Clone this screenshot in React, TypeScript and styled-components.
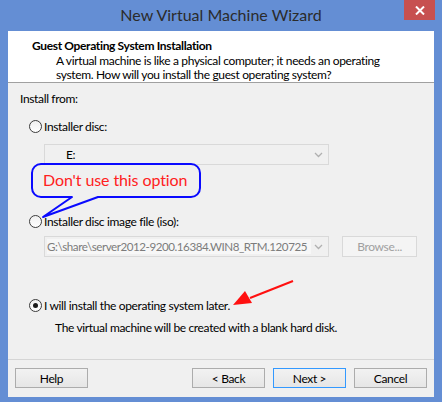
import styled, { createGlobalStyle } from 'styled-components';

const GlobalStyle = createGlobalStyle`
  html, body {
    margin: 0;
    padding: 0;
    background: #648ed4;
  }
  body {
    font-family: Lato, 'Liberation Sans', sans-serif;
    font-size: 12px;
    letter-spacing: -0.35px;
    color: #000;
  }
`;

const Window = styled.div`
  width: 442px;
  height: 402px;
  box-sizing: border-box;
  background: #648ed4;
  padding: 0 8px 5px;
  display: flex;
  flex-direction: column;
`;

const TitleBar = styled.div`
  height: 31px;
  margin: 0 -8px;
  display: grid;
  grid-template-columns: 1fr auto 1fr;
  align-items: start;
`;

const Title = styled.div`
  grid-column: 2;
  font-size: 16px;
  letter-spacing: 0;
  line-height: 30px;
  color: #2b2b2b;
`;

const CloseButton = styled.div`
  grid-column: 3;
  justify-self: end;
  margin-right: 7px;
  width: 31px;
  height: 20px;
  background: #c75050;
  display: flex;
  align-items: center;
  justify-content: center;
`;

const Client = styled.div`
  flex: 1;
  background: #f0f0f0;
  display: flex;
  flex-direction: column;
`;

const Header = styled.div`
  height: 52px;
  box-sizing: border-box;
  background: #fff;
  border-bottom: 1px solid #a0a0a0;
  padding: 7px 20px 0 24px;
`;

const HeaderTitle = styled.div`
  font-weight: bold;
  line-height: 15px;
`;

const HeaderText = styled.div`
  margin: 1px 0 0 24px;
  line-height: 14px;
  white-space: nowrap;
`;

const Content = styled.div`
  flex: 1;
  position: relative;
  padding: 8px 0 0 12px;
`;

const Label = styled.div`
  line-height: 15px;
`;

const OptionRow = styled.label<{ $top: number }>`
  display: flex;
  align-items: center;
  gap: 2px;
  margin: ${(p) => p.$top}px 0 0 9px;
  line-height: 15px;
`;

const Radio = styled.span<{ $checked?: boolean }>`
  width: 13px;
  height: 13px;
  box-sizing: border-box;
  border-radius: 50%;
  border: 1px solid #3c3c3c;
  background: linear-gradient(#f0f0f0, #ffffff);
  display: flex;
  align-items: center;
  justify-content: center;
  &::after {
    content: '';
    display: ${(p) => (p.$checked ? 'block' : 'none')};
    width: 5px;
    height: 5px;
    border-radius: 50%;
    background: #1a1a1a;
  }
`;

const FieldRow = styled.div<{ $top: number }>`
  display: flex;
  gap: 13px;
  margin: ${(p) => p.$top}px 0 0 24px;
`;

const Combo = styled.div<{ $indent: number }>`
  width: 285px;
  height: 21px;
  box-sizing: border-box;
  border: 1px solid #d9d9d9;
  background: #f0f0f0;
  display: flex;
  align-items: center;
  gap: 3px;
  padding: 0 5px 0 ${(p) => p.$indent}px;
  line-height: 15px;
`;

const ComboText = styled.span<{ $disabled?: boolean }>`
  flex: 1;
  white-space: nowrap;
  overflow: hidden;
  color: ${(p) => (p.$disabled ? '#7c7c7c' : '#000')};
  background: ${(p) => (p.$disabled ? '#f7f7f7' : 'transparent')};
  font-size: ${(p) => (p.$disabled ? '11.6px' : '12px')};
  letter-spacing: ${(p) => (p.$disabled ? '-0.45px' : '-0.35px')};
`;

const Button = styled.div<{ $default?: boolean; $disabled?: boolean }>`
  width: 75px;
  height: 21px;
  box-sizing: border-box;
  border: 1px solid ${(p) => (p.$default ? '#3399ff' : p.$disabled ? '#d9d9d9' : '#acacac')};
  background: ${(p) => (p.$disabled ? '#f4f4f4' : 'linear-gradient(#f2f2f2, #e6e6e6)')};
  color: ${(p) => (p.$disabled ? '#a0a0a0' : '#000')};
  display: flex;
  align-items: center;
  justify-content: center;
  line-height: 15px;
`;

const Note = styled.div`
  margin: 7px 0 0 35px;
  line-height: 15px;
`;

const Footer = styled.div`
  height: 38px;
  box-sizing: border-box;
  border-top: 1px solid #d5d5d5;
  padding: 8px 7px 0;
  display: flex;
  align-items: flex-start;
  gap: 8px;
`;

const Spacer = styled.div`
  flex: 1;
`;

const FooterButton = styled(Button)`
  width: 73px;
  height: 20px;
`;

const Callout = styled.div`
  position: absolute;
  left: 22px;
  top: 79px;
  width: 182px;
  height: 60px;
`;

const CalloutText = styled.span`
  position: absolute;
  left: 13px;
  top: 8px;
  font-size: 16px;
  letter-spacing: -0.1px;
  line-height: 20px;
  color: #ff2020;
  white-space: nowrap;
`;

const ArrowMark = styled.svg`
  position: absolute;
  left: 222px;
  top: 195px;
`;

const Chevron = () => (
  <svg width="9" height="6" viewBox="0 0 9 6">
    <polyline points="1,1 4.5,4.5 8,1" fill="none" stroke="#b0b0b0" strokeWidth="1.3" />
  </svg>
);

export default function App() {
  return (
    <>
      <GlobalStyle />
      <Window>
        <TitleBar>
          <Title>New Virtual Machine Wizard</Title>
          <CloseButton>
            <svg width="10" height="9" viewBox="0 0 10 9">
              <path d="M1 0.5 L9 8.5 M9 0.5 L1 8.5" stroke="#fff" strokeWidth="2" />
            </svg>
          </CloseButton>
        </TitleBar>
        <Client>
          <Header>
            <HeaderTitle>Guest Operating System Installation</HeaderTitle>
            <HeaderText>
              A virtual machine is like a physical computer; it needs an operating
              <br />
              system. How will you install the guest operating system?
            </HeaderText>
          </Header>
          <Content>
            <Label>Install from:</Label>
            <OptionRow $top={13}>
              <Radio />
              Installer disc:
            </OptionRow>
            <FieldRow $top={10}>
              <Combo $indent={21}>
                <ComboText>E:</ComboText>
                <Chevron />
              </Combo>
            </FieldRow>
            <OptionRow $top={49}>
              <Radio />
              Installer disc image file (iso):
            </OptionRow>
            <FieldRow $top={7}>
              <Combo $indent={2}>
                <ComboText $disabled>G:\share\server2012-9200.16384.WIN8_RTM.120725</ComboText>
                <Chevron />
              </Combo>
              <Button $disabled>Browse...</Button>
            </FieldRow>
            <OptionRow $top={41}>
              <Radio $checked />
              I will install the operating system later.
            </OptionRow>
            <Note>The virtual machine will be created with a blank hard disk.</Note>

            <Callout>
              <svg width="182" height="60" viewBox="0 0 182 60">
                <path
                  d="M11 2 H161 A9 9 0 0 1 170 11 V26 A9 9 0 0 1 161 35 H68 L13 55 L42 35 H11 A9 9 0 0 1 2 26 V11 A9 9 0 0 1 11 2 Z"
                  fill="#f0f0f0"
                  stroke="#0a0aff"
                  strokeWidth="2"
                  strokeLinejoin="round"
                />
              </svg>
              <CalloutText>Don't use this option</CalloutText>
            </Callout>

            <ArrowMark width="70" height="30" viewBox="0 0 70 30">
              <line x1="63" y1="3" x2="20" y2="20" stroke="#ff1010" strokeWidth="2" />
              <polygon points="3,27 15,13 22,25" fill="#ff1010" />
            </ArrowMark>
          </Content>
          <Footer>
            <FooterButton>Help</FooterButton>
            <Spacer />
            <FooterButton>&lt; Back</FooterButton>
            <FooterButton $default>Next &gt;</FooterButton>
            <FooterButton>Cancel</FooterButton>
          </Footer>
        </Client>
      </Window>
    </>
  );
}
